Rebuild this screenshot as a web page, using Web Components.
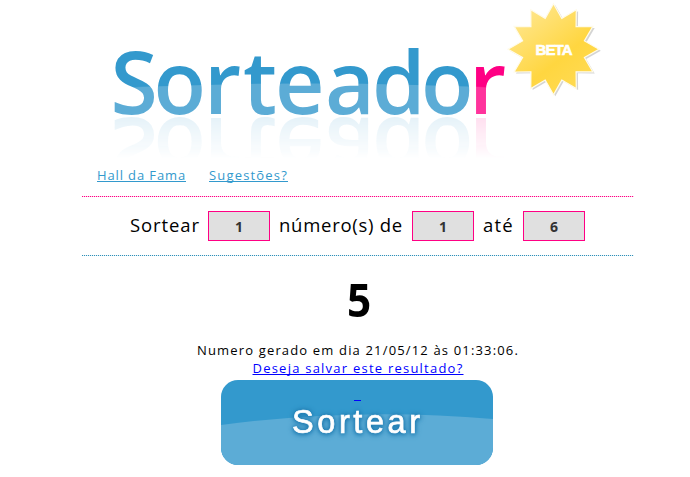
<!DOCTYPE html>
<html lang="pt-BR">
<head>
<meta charset="utf-8">
<title>Sorteador</title>
<style>
html,body{margin:0;background:#fff}
body{width:690px;height:477px;overflow:hidden;font-family:"Open Sans","Noto Sans",sans-serif;color:#000}
</style>
</head>
<body>
<sorteador-app></sorteador-app>
<script>
const define=(name,html,init)=>{
  const t=document.createElement('template');t.innerHTML=html;
  customElements.define(name,class extends HTMLElement{
    constructor(){super();this.attachShadow({mode:'open'}).append(t.content.cloneNode(true));}
    connectedCallback(){if(init)init(this);}
  });
};

/* Text run tracked out to a given width */
define('fit-text',`<style>:host{display:inline-block;white-space:pre}span{white-space:pre}
:host([link]) span{text-decoration:underline 1px;text-underline-offset:1px;text-decoration-skip-ink:none}</style><span><slot></slot></span>`,el=>{
  const w=+el.getAttribute('width'),n=[...el.textContent].length;
  const s=el.shadowRoot.querySelector('span');
  const natural=s.getBoundingClientRect().width;
  s.style.letterSpacing=((w-natural)/n)+'px';
  el.style.width=w+'px';
});

define('site-logo',`<style>
:host{display:block;height:116px}
svg{display:block;-webkit-box-reflect:below 0 linear-gradient(to top,rgba(0,0,0,.16),rgba(0,0,0,0) 43px)}
text{font:600 86px "Open Sans",sans-serif}
</style>
<svg width="440" height="116" viewBox="82 0 440 116">
<defs>
<pattern id="b" patternUnits="userSpaceOnUse" x="0" y="0" width="690" height="140"><rect width="690" height="140" fill="#3399cd"/><path d="M100 89Q310 78 520 89V140H100Z" fill="#5cacd6"/></pattern>
<pattern id="p" patternUnits="userSpaceOnUse" x="0" y="0" width="690" height="140"><rect width="690" height="140" fill="#ff0084"/><path d="M100 89Q310 78 520 89V140H100Z" fill="#ff339c"/></pattern>
</defs>
<text y="113.5" x="110.5 153.5 204 243 275 325 372 421 469" fill="url(#b)">Sorteado<tspan fill="url(#p)">r</tspan></text>
</svg>`);

define('beta-badge',`<style>:host{display:block}svg{display:block;overflow:visible}
text{font:bold 15px "Liberation Sans",sans-serif;fill:#fff;stroke:#fff;stroke-width:.6}</style>
<svg width="100" height="100" viewBox="503 -1 100 100">
<defs><linearGradient id="g" x1="0" y1="0" x2=".8" y2="1"><stop offset="0" stop-color="#ffeaa0"/><stop offset=".65" stop-color="#ffd640"/><stop offset="1" stop-color="#ffdb55"/></linearGradient></defs>
<polygon fill="#aaa" opacity=".5" transform="translate(1.8 1.5)"/><polygon fill="url(#g)" stroke="#fffbea" stroke-width="1.2"/>
<text x="535.5" y="54.7" textLength="37" lengthAdjust="spacing">BETA</text>
</svg>`,el=>{
  const pts=[];
  for(let i=0;i<24;i++){const r=i%2?32:45.5,a=i*Math.PI/12;pts.push((553.5+r*Math.sin(a)).toFixed(1)+','+(49.2-r*Math.cos(a)).toFixed(1));}
  el.shadowRoot.querySelectorAll('polygon').forEach(p=>p.setAttribute('points',pts.join(' ')));
});

define('site-nav',`<style>:host{display:flex;gap:23px;padding-left:15px;height:20px;font-size:13px;line-height:20px}
::slotted(a){color:#3399cd}</style><slot></slot>`);

define('number-field',`<style>:host{display:block;width:62px;height:30px;box-sizing:border-box;border:1px solid #ff0084;background:#e0e0e0;color:#333;
font-size:14px;font-weight:700;line-height:29px;text-align:center}</style><slot></slot>`);

define('draw-form',`<style>:host{display:flex;align-items:flex-start;box-sizing:border-box;height:60px;padding:15px 0 0 48px;font-size:18.5px;line-height:27px;
background:repeating-linear-gradient(90deg,#ff0084 0 1px,#ffd0e8 1px 2px) 0 0/100% 1px no-repeat,repeating-linear-gradient(90deg,#3090b8 0 1px,#e4f2f8 1px 2px) 0 100%/100% 1px no-repeat}
.a{margin-right:8px}.b,.c{margin:0 9px}</style>
<fit-text class="a" width="70">Sortear</fit-text><number-field>1</number-field>
<fit-text class="b" width="124">número(s) de</fit-text><number-field>1</number-field>
<fit-text class="c" width="31">até</fit-text><number-field>6</number-field>`);

define('draw-result',`<style>:host{display:flex;flex-direction:column;align-items:center;height:124px;font-size:13px;line-height:18px}
.n{font-size:46px;font-weight:700;line-height:60px;margin:13px 0 12px 2px;transform:scaleX(.92)}
a{color:#00f}</style>
<div class="n"><slot name="number"></slot></div>
<fit-text width="322">Numero gerado em dia 21/05/12 às 01:33:06.</fit-text>
<a><fit-text link width="211">Deseja salvar este resultado?</fit-text></a>`);

define('draw-button',`<style>:host{display:block;position:relative;width:272px;height:85px;margin-left:139px}
svg{display:block}
text{font:32.5px "Liberation Sans",sans-serif;fill:#fff;stroke:#fff;stroke-width:.7;filter:drop-shadow(0 0 2px #1c78ae) drop-shadow(0 1px 2px #2380b5)}
i{position:absolute;left:133px;top:20px;width:7px;height:1px;background:#00f}</style>
<svg width="272" height="85"><defs><clipPath id="c"><rect width="272" height="85" rx="17"/></clipPath></defs>
<g clip-path="url(#c)"><rect width="272" height="85" fill="#3399cd"/><path d="M0 45Q136 27 272 39V85H0Z" fill="#5cacd6"/></g>
<text x="71" y="52.7" textLength="128" lengthAdjust="spacing">Sortear</text></svg><i></i>`);

define('sorteador-app',`<style>:host{display:block;position:relative;width:552px;margin-left:82px}
site-nav{margin:49px 0 11px}
beta-badge{position:absolute;left:421px;top:-1px}</style>
<site-logo></site-logo><beta-badge></beta-badge>
<site-nav><a><fit-text link width="89">Hall da Fama</fit-text></a><a><fit-text link width="79">Sugestões?</fit-text></a></site-nav>
<draw-form></draw-form>
<draw-result><span slot="number">5</span></draw-result>
<draw-button></draw-button>`);
</script>
</body>
</html>
